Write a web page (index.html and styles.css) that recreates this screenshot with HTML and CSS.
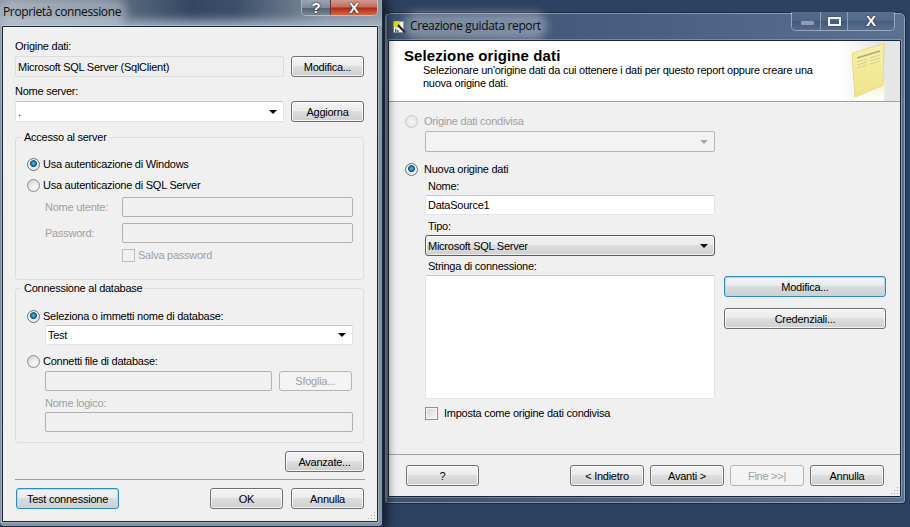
FILE: index.html
```html
<!DOCTYPE html>
<html lang="it">
<head>
<meta charset="utf-8">
<title>Proprietà connessione</title>
<link rel="stylesheet" href="styles.css">
</head>
<body>
<div class="desktop">

  <section class="window wizard">
    <header class="titlebar">
      <svg class="wizard-icon" width="13" height="14" viewBox="0 0 13 14">
        <rect x="0.5" y="1.5" width="10" height="11" fill="#f4f4f4" stroke="#8a8a8a"/>
        <circle cx="4" cy="4.5" r="3.4" fill="#e6e000"/>
        <path d="M5 5 L12 12.5" stroke="#111" stroke-width="2"/>
        <rect x="2" y="9" width="1.5" height="3" fill="#d33"/>
        <rect x="4" y="10" width="1.5" height="2" fill="#36c"/>
      </svg>
      <span class="title-text">Creazione guidata report</span>
      <div class="caption-group wide">
        <div class="cap cap-min"><span class="min-glyph"></span></div>
        <div class="cap cap-max"><span class="max-glyph"></span></div>
        <div class="cap cap-close-plain"><span class="x-glyph">X</span></div>
      </div>
    </header>
    <div class="client wiz-client">
      <div class="wiz-head">
        <div class="wiz-head-text">
          <h1 class="wiz-title">Selezione origine dati</h1>
          <p class="wiz-sub">Selezionare un'origine dati da cui ottenere i dati per questo report oppure creare una<br>nuova origine dati.</p>
        </div>
        <svg class="note" width="36" height="60" viewBox="0 0 36 60">
          <defs>
            <linearGradient id="noteFill" x1="0" y1="0" x2="0" y2="1">
              <stop offset="0" stop-color="#f7f1a6"/>
              <stop offset="1" stop-color="#efe48c"/>
            </linearGradient>
            <linearGradient id="noteFade" x1="0" y1="0" x2="0" y2="1">
              <stop offset="0" stop-color="#f4efc8"/>
              <stop offset="1" stop-color="#ffffff"/>
            </linearGradient>
          </defs>
          <polygon points="4,49 35,40 34,60 5,60" fill="url(#noteFade)"/>
          <polygon points="2,12.5 34,2.5 33,44 5,56" fill="url(#noteFill)" stroke="#e5d98a"/>
          <path d="M7 17 L30 10" stroke="#a9a688" stroke-width="1.4"/>
          <path d="M7 21 L17 18 M20 17 L30 14 M7 24 L17 21 M20 20 L30 17 M7 27 L17 24 M20 23 L30 20" stroke="#d5cf9a" stroke-width="1"/>
        </svg>
      </div>
      <div class="wiz-body">
        <div class="opt opt-first dim"><span class="radio radio-dis"></span><span>Origine dati condivisa</span></div>
        <div class="combo combo-dis wiz-field mt3"></div>
        <div class="opt opt-second"><span class="radio radio-on"></span><span>Nuova origine dati</span></div>
        <div class="wiz-label mt3">Nome:</div>
        <div class="textbox wiz-input wiz-field mt2">DataSource1</div>
        <div class="wiz-label mt4">Tipo:</div>
        <div class="combo combo-btn wiz-field mt2">Microsoft SQL Server</div>
        <div class="wiz-label mt3">Stringa di connessione:</div>
        <div class="conn-row">
          <div class="textbox textarea"></div>
          <div class="conn-actions">
            <button class="btn btn-focus btn-wide">Modifica...</button>
            <button class="btn btn-wide">Credenziali...</button>
          </div>
        </div>
        <div class="check-row"><span class="check"></span><span class="save-text">Imposta come origine dati condivisa</span></div>
      </div>
      <footer class="wiz-foot">
        <button class="btn">?</button>
        <div class="spacer"></div>
        <button class="btn btn-nav">&lt; Indietro</button>
        <button class="btn btn-nav">Avanti &gt;</button>
        <button class="btn btn-nav btn-dis">Fine &gt;&gt;|</button>
        <button class="btn btn-nav">Annulla</button>
      </footer>
      <svg class="grip" width="11" height="11" viewBox="0 0 11 11"><path d="M8 2h1v1H8zM5 5h1v1H5zM8 5h1v1H8zM2 8h1v1H2zM5 8h1v1H5zM8 8h1v1H8z" fill="#a8a8a8"/></svg>
    </div>
  </section>

  <section class="window props">
    <header class="titlebar titlebar-props">
      <span class="title-text">Proprietà connessione</span>
      <div class="caption-group narrow">
        <div class="cap cap-help"><span class="x-glyph">?</span></div>
        <div class="cap cap-close"><span class="x-glyph">X</span></div>
      </div>
    </header>
    <div class="client props-client">
      <div class="label lab-first">Origine dati:</div>
      <div class="row mt3">
        <div class="textbox readonly grow">Microsoft SQL Server (SqlClient)</div>
        <button class="btn btn-std">Modifica...</button>
      </div>
      <div class="label mt7">Nome server:</div>
      <div class="row mt3">
        <div class="combo grow">.</div>
        <button class="btn btn-std">Aggiorna</button>
      </div>

      <fieldset class="group group-server">
        <legend>Accesso al server</legend>
        <div class="opt opt-g1"><span class="radio radio-on"></span><span>Usa autenticazione di Windows</span></div>
        <div class="opt mt7"><span class="radio"></span><span>Usa autenticazione di SQL Server</span></div>
        <div class="field-row mt5"><span class="field-label dim">Nome utente:</span><div class="textbox disabled grow"></div></div>
        <div class="field-row mt6"><span class="field-label dim">Password:</span><div class="textbox disabled grow"></div></div>
        <div class="save-row dim"><span class="check check-dis"></span><span class="save-text">Salva password</span></div>
      </fieldset>

      <fieldset class="group group-db">
        <legend>Connessione al database</legend>
        <div class="opt opt-g2"><span class="radio radio-on"></span><span>Seleziona o immetti nome di database:</span></div>
        <div class="combo indent mt2">Test</div>
        <div class="opt mt9"><span class="radio"></span><span>Connetti file di database:</span></div>
        <div class="browse-row mt3">
          <div class="textbox disabled grow"></div>
          <button class="btn btn-browse btn-dis">Sfoglia...</button>
        </div>
        <div class="label indent dim mt5">Nome logico:</div>
        <div class="textbox disabled indent mt2"></div>
      </fieldset>

      <div class="adv-row"><button class="btn btn-adv">Avanzate...</button></div>
      <div class="sep"></div>
      <div class="foot-row">
        <button class="btn btn-focus btn-test">Test connessione</button>
        <div class="spacer"></div>
        <button class="btn btn-std">OK</button>
        <button class="btn btn-std">Annulla</button>
      </div>
      <svg class="grip" width="11" height="11" viewBox="0 0 11 11"><path d="M8 2h1v1H8zM5 5h1v1H5zM8 5h1v1H8zM2 8h1v1H2zM5 8h1v1H5zM8 8h1v1H8z" fill="#a8a8a8"/></svg>
    </div>
  </section>

</div>
</body>
</html>
```
FILE: styles.css
```css
* { box-sizing: border-box; }
html, body { margin: 0; padding: 0; }
body {
  width: 910px;
  height: 527px;
  overflow: hidden;
  font: 11px/14px "Liberation Sans", Arial, sans-serif;
  letter-spacing: -0.25px;
  color: #000;
}
.desktop {
  position: relative;
  width: 910px;
  height: 527px;
  overflow: hidden;
  background-color: #2d4263;
  background-image: repeating-conic-gradient(#2f4568 0 25%, #2a3e5e 0 50%);
  background-size: 2px 2px;
}

/* windows on the desktop */
.window {
  position: absolute;
  display: flex;
  flex-direction: column;
}
.wizard {
  left: 385px;
  top: 12px;
  width: 521px;
  height: 492px;
  border-radius: 6px 6px 4px 4px;
  border: 1px solid #1d2a3d;
  border-left-color: #9aa7b5;
  background: linear-gradient(90deg, #3b5170 0, #4a6183 55%, #5b7192 100%);
  box-shadow: inset 0 0 0 1px rgba(255,255,255,.35);
  padding: 0 4px 6px 2px;
}
.props {
  left: 0;
  top: 0;
  width: 383px;
  height: 527px;
  z-index: 2;
  padding: 0 4px 4px 2px;
  border-right: 1px solid #1f2d42;
  border-bottom: 1px solid #1f2d42;
  border-radius: 0 0 4px 4px;
  background: linear-gradient(180deg, #6f7f92 0, #8f9dac 30px, #7f8fa2 200px, #8595a6 100%);
  box-shadow: 0 0 12px 3px rgba(0,0,0,.75);
}
.titlebar {
  height: 27px;
  flex: none;
  display: flex;
  align-items: flex-start;
  position: relative;
}
.titlebar-props {
  height: 26px;
  background: linear-gradient(90deg, rgba(125,140,155,1) 0, rgba(95,112,132,1) 30%, rgba(52,71,98,1) 50%, rgba(60,80,106,1) 62%, rgba(130,143,158,1) 85%, rgba(140,152,166,1) 100%);
  margin: 0 -4px 0 -2px;
  padding: 0 4px 0 2px;
  box-shadow: inset 0 -10px 10px -4px rgba(170,184,198,.85);
}
.title-text {
  font: 12px/16px "Open Sans", "Liberation Sans", sans-serif;
  letter-spacing: -0.36px;
  color: #0c0c0c;
  background: rgba(255,255,255,.32);
  box-shadow: 0 0 9px 6px rgba(255,255,255,.32);
  border-radius: 8px;
}
.titlebar-props .title-text { margin: 4px 0 0 1px; }
.wizard .title-text { margin: 5px 0 0 4px; }
.wizard-icon { margin: 7px 0 0 5px; flex: none; }

.caption-group {
  margin-left: auto;
  display: flex;
  border: 1px solid rgba(235,240,248,.45);
  border-top: 0;
  border-radius: 0 0 5px 5px;
  overflow: hidden;
}
.caption-group.narrow { height: 16px; }
.caption-group.wide { height: 19px; margin-right: 6px; margin-top: -1px; }
.cap {
  display: flex;
  align-items: center;
  justify-content: center;
  border-left: 1px solid rgba(235,240,248,.4);
}
.cap:first-child { border-left: 0; }
.cap-min { width: 28px; padding: 3px 0 0 2px; background: linear-gradient(180deg, #566c8c, #4f6586 50%, #42587a 50%, #55698a); }
.cap-max { width: 27px; background: linear-gradient(180deg, #566c8c, #4f6586 50%, #42587a 50%, #55698a); }
.cap-close-plain { width: 47px; background: linear-gradient(180deg, #5a7090, #53698a 50%, #475d7f 50%, #596e8f); }
.cap-help { width: 28px; background: linear-gradient(180deg, #9aa4af, #7f8b97 50%, #56616f 55%, #7a8693); }
.cap-close { width: 47px; border-left-color: #5e3a32; background: linear-gradient(180deg, #cf9b90 0, #c0705f 45%, #b32a10 55%, #cf6a4a 100%); }
.x-glyph {
  font: bold 15px/14px "Liberation Sans", sans-serif;
  letter-spacing: 0;
  color: #fff;
  text-shadow: 0 0 2px #1b2330, 0 0 1px #1b2330;
}
.min-glyph { width: 13px; height: 4px; background: #8d9cb0; border-radius: 1px; }
.max-glyph { width: 13px; height: 9px; border: 2px solid #f1f4f8; border-top-width: 2px; box-shadow: 0 0 1px #1b2330; }

/* client areas */
.client {
  position: relative;
  flex: 1;
  display: flex;
  flex-direction: column;
  background: #f0f0f0;
  border: 1px solid #1c2534;
  border-radius: 1px;
  box-shadow: 0 0 0 1px rgba(255,255,255,.25);
}
.grip { position: absolute; right: 0; bottom: 0; }

.props-client { padding: 0 13px 0 12px; }
.label { height: 14px; }
.lab-first { margin-top: 12px; }
.dim { color: #a0a0a0; }
.grow { flex: 1; min-width: 0; }
.spacer { flex: 1; }
.mt2 { margin-top: 2px; }
.mt3 { margin-top: 3px; }
.mt4 { margin-top: 4px; }
.mt5 { margin-top: 5px; }
.mt6 { margin-top: 6px; }
.mt7 { margin-top: 7px; }
.mt9 { margin-top: 9px; }
.row { display: flex; gap: 7px; height: 21px; }

/* fields */
.textbox, .combo {
  display: flex;
  align-items: center;
  height: 21px;
  padding: 0 2px;
  background: #fff;
  border: 1px solid #dfe5ea;
  border-top-color: #c4c8cc;
  border-radius: 2px;
  white-space: nowrap;
}
.readonly { background: #efefef; border-color: #dcdcdc; }
.disabled { height: 20px; background: #f0f0f0; border: 1px solid #b0b0b0; }
.combo::after {
  content: "";
  margin: 0 4px 0 auto;
  border: 4px solid transparent;
  border-top: 4px solid #000;
  border-bottom: 0;
  flex: none;
}
.combo-dis { background: #f3f3f3; border: 1px solid #b5b5b5; }
.combo-dis::after { border-top-color: #a8a8a8; }
.combo-btn {
  border: 1px solid #5c5c5c;
  border-radius: 3px;
  background: linear-gradient(180deg, #f2f2f2 0, #ebebeb 48%, #dddddd 50%, #cfcfcf 100%);
  box-shadow: inset 0 0 0 1px rgba(255,255,255,.6);
}
.wiz-input { height: 20px; }
.textarea { width: 290px; height: 124px; }

/* buttons */
.btn {
  height: 21px;
  width: 73px;
  padding: 0;
  flex: none;
  font: inherit;
  letter-spacing: inherit;
  color: #000;
  border: 1px solid #707070;
  border-radius: 3px;
  background: linear-gradient(180deg, #f3f3f3 0, #ebebeb 48%, #dddddd 50%, #cfcfcf 100%);
  box-shadow: inset 0 0 0 1px rgba(255,255,255,.75);
}
.btn-focus {
  border-color: #2f8bbd;
  box-shadow: inset 0 0 0 1px #a9e0f3;
  background: linear-gradient(180deg, #f2f3f4 0, #e9ebec 48%, #d9dcdd 50%, #ccd0d2 100%);
}
.btn-dis {
  color: #a0a0a0;
  background: #f4f4f4;
  border-color: #b5b5b5;
  box-shadow: none;
}
.btn-std { width: 73px; }
.btn-test { width: 103px; margin-left: 1px; }
.btn-adv { width: 79px; }
.btn-browse { width: 73px; height: 20px; }
.btn-wide { width: 162px; }
.btn-nav { width: 74px; }

/* radio and check */
.radio {
  width: 13px;
  height: 13px;
  flex: none;
  border-radius: 50%;
  border: 1px solid #8f9091;
  background: radial-gradient(circle at 60% 65%, #fbfbfb 0, #e8e8e8 45%, #c4c4c4 100%);
}
.radio-on {
  background: radial-gradient(circle at 50% 42%, #57c3ea 0, #1878ad 26%, #0f4f7c 36%, #f1f1f1 46%, #e2e2e2 100%);
  border-color: #6f7173;
}
.radio-dis { border-color: #c8c8c8; background: radial-gradient(circle, #f6f6f6, #dedede); }
.check {
  width: 13px;
  height: 13px;
  flex: none;
  border: 1px solid #8e8f8f;
  background: linear-gradient(135deg, #d6d6d6, #f7f7f7);
  box-shadow: inset 0 0 0 1px #f6f6f6;
}
.check-dis { border-color: #bdbdbd; background: #f0f0f0; box-shadow: none; }

/* group boxes */
.group {
  margin: 0;
  min-width: 0;
  width: 349px;
  border: 1px solid #dadfe3;
  border-radius: 3px;
  padding: 0 10px 0 11px;
  display: block;
}
.group legend {
  padding: 0 2px;
  margin-left: -5px;
  height: 14px;
  line-height: 14px;
}
.group-server { height: 150px; margin-top: 8px; }
.group-db { height: 162px; margin-top: 1px; }
.opt { display: flex; align-items: center; gap: 3px; height: 14px; }
.opt-g1 { margin-top: 13px; }
.opt-g2 { margin-top: 14px; }
.field-row { display: flex; align-items: center; margin-left: 18px; height: 20px; }
.field-label { width: 77px; flex: none; }
.save-row { display: flex; align-items: flex-start; gap: 3px; margin: 6px 0 0 95px; height: 13px; }
.save-text { line-height: 12px; }
.indent { margin-left: 18px; }
.group .combo.indent { height: 20px; }
.browse-row { display: flex; gap: 7px; margin-left: 18px; height: 20px; margin-right: 1px; }
.adv-row { display: flex; justify-content: flex-end; margin-top: 8px; }
.sep { height: 1px; background: #a0a0a0; margin-top: 7px; width: 350px; }
.foot-row { display: flex; gap: 8px; margin-top: 8px; }
.foot-row .spacer { margin-right: -8px; }

/* wizard */
.wiz-head {
  height: 61px;
  flex: none;
  display: flex;
  justify-content: space-between;
  background: linear-gradient(90deg, #fff 0, #fff 88%, #e6e6e6 96%, #e6e6e6 100%);
  border-bottom: 1px solid #a0a0a0;
}
.wiz-head-text { padding: 6px 0 0 15px; }
.wiz-title { margin: 0; font: bold 15px/17px "Liberation Sans", Arial, sans-serif; letter-spacing: 0.1px; }
.wiz-sub { margin: 0 0 0 19px; line-height: 13px; white-space: nowrap; }
.note { flex: none; margin-right: 14px; align-self: flex-end; }
.wiz-body { flex: 1; padding: 0 0 0 16px; display: flex; flex-direction: column; }
.opt-first { margin-top: 12px; gap: 6px; }
.opt-second { margin-top: 10px; gap: 6px; }
.wiz-field { width: 290px; margin-left: 20px; flex: none; }
.wiz-label { height: 14px; margin-left: 23px; }
.conn-row { display: flex; gap: 9px; margin: 2px 0 0 20px; }
.conn-actions { display: flex; flex-direction: column; gap: 11px; margin-top: 1px; }
.check-row { display: flex; align-items: flex-start; gap: 6px; margin: 8px 0 0 20px; height: 13px; }
.wiz-foot {
  flex: none;
  height: 42px;
  display: flex;
  gap: 6px;
  padding: 10px 16px 0 17px;
  border-top: 1px solid #a0a0a0;
}
```
